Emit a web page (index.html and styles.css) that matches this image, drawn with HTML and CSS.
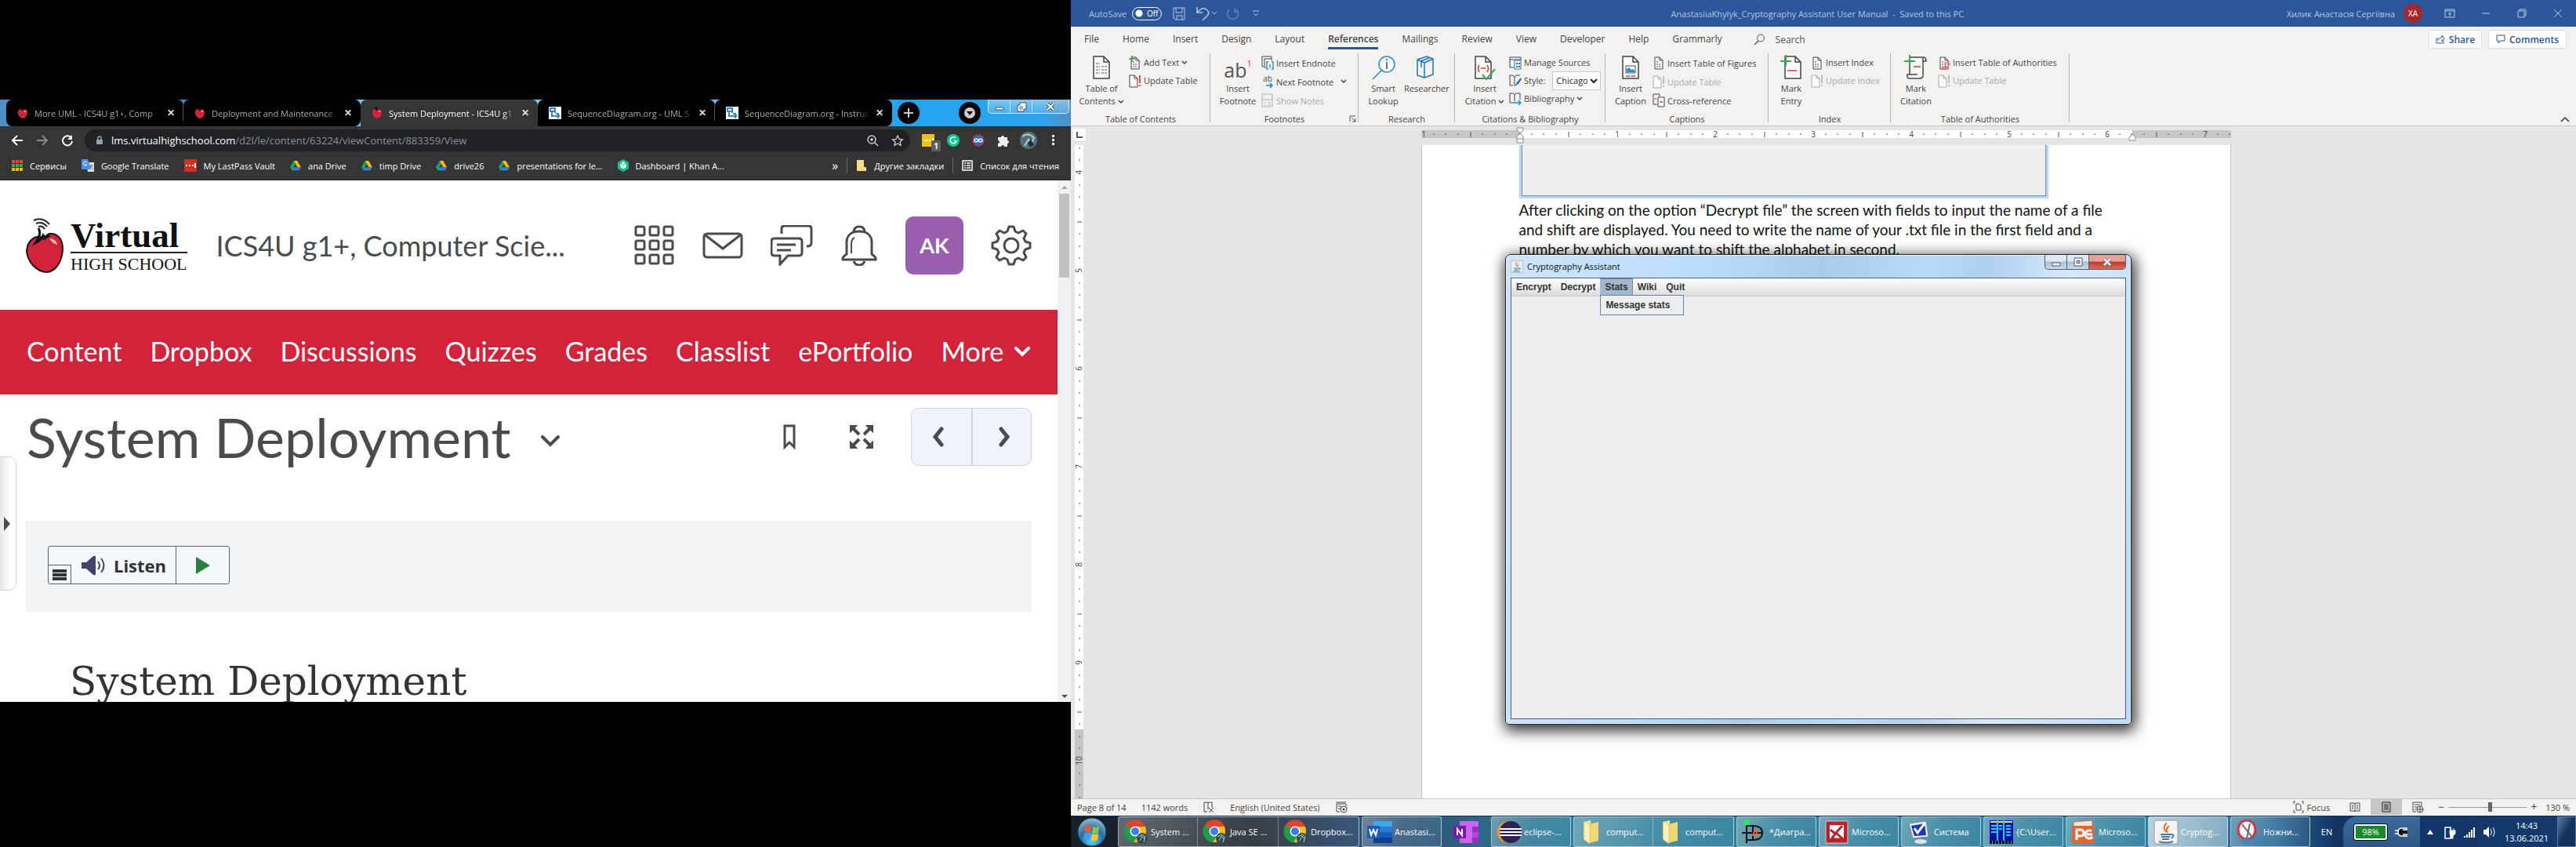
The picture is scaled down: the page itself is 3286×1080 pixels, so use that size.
FILE: index.html
```html
<!DOCTYPE html>
<html lang="en">
<head>
<meta charset="utf-8">
<title>Two-monitor desktop</title>
<link rel="stylesheet" href="styles.css">
</head>
<body>
<svg class="defs" aria-hidden="true">
  <symbol id="apple" viewBox="0 0 48 70"><path d="M10 3Q21-2 30 8M13 7Q21 4 27 11M16 11Q21 9 24 14" fill="none" stroke="#222" stroke-width="2"/><path d="M24 27C15 19 2 27 1 42C2 56 14 69 27 69C38 68 46 56 47 40C47 26 40 19 30 20Q26 21 24 27Z" fill="#d2233a" stroke="#111" stroke-width="2"/><path d="M16 13C20 20 16 26 12 32Q20 28 22 22Q26 27 30 22" fill="none" stroke="#111" stroke-width="3"/><path d="M30 26Q38 26 40 34Q33 32 30 26Z" fill="#f6b9b0"/></symbol>
  <symbol id="fav" viewBox="0 0 14 16"><path d="M7 4C3 2 0 5 1 9Q3 15 8 15Q13 13 13 7Q12 2 7 4Z" fill="#d2233a"/><path d="M7 5Q5 3 6 0" stroke="#000" stroke-width="1.5" fill="none"/><circle cx="10" cy="6" r="1" fill="#f7c4c4"/></symbol>
  <symbol id="seq" viewBox="0 0 16 16"><path d="M0 0h16v16H0z" fill="#fff"/><path d="M2 2h6v4H2zM4 6v6h8M9 9h3v6M8 2v6" fill="none" stroke="#2f86cf" stroke-width="2"/><path d="M11 8l4 3.500-4 3.500z" fill="#2f86cf"/></symbol>
  <symbol id="drive" viewBox="0 0 16 14"><path d="M5.500 0L0 9.500 2.700 14 8 4.500z" fill="#14a667"/><path d="M5.500 0h5L16 9.500h-5.300z" fill="#fbbc05"/><path d="M2.700 14L5.400 9.500H16L13.300 14z" fill="#3b7de8"/></symbol>
  <symbol id="chev" viewBox="0 0 8 6"><path d="M1 1l3 3 3-3" fill="none" stroke="currentColor" stroke-width="1.500"/></symbol>
  <symbol id="doc" viewBox="0 0 24 32"><path d="M2 2h13l7 7v21H2zM15 2v7h7" fill="#fafafa" stroke="#444" stroke-width="1.500"/></symbol>
  <symbol id="sdoc" viewBox="0 0 16 18"><path d="M3 2h6l4 4v11H3zM9 2v4h4" fill="#fafafa" stroke="currentColor"/><path d="M5 8h3M5 11h6M5 14h6" stroke="currentColor" stroke-dasharray="2 1"/></symbol>
  <symbol id="upd" viewBox="0 0 16 18"><path d="M1 2h6l4 4v11H1zM7 2v4h4" fill="#fafafa" stroke="currentColor"/><path d="M14 2v10M14 14v2" stroke="var(--mark,#b5b5b5)" stroke-width="1.700"/></symbol>
  <symbol id="chrome" viewBox="0 0 32 32"><circle cx="15" cy="15" r="14" fill="#fbc116"/><path d="M15 15L3 7A14 14 0 0 1 28 9H15z" fill="#df4332"/><path d="M15 15L3 7A14 14 0 0 0 13 29l6-9z" fill="#229a4e"/><circle cx="15" cy="15" r="6.500" fill="#fff"/><circle cx="15" cy="15" r="5" fill="#3b7de9"/><circle cx="24" cy="24" r="7" fill="#31474f"/><path d="M19 22l5-3 4 3-2 7M21 27l3-6 3 4" stroke="#b7d1d9" fill="none"/></symbol>
  <symbol id="folder" viewBox="0 0 32 32"><path d="M6 3l9-2v27l-9-3z" fill="#f8e492"/><path d="M13 6l12-3v24l-12 3z" fill="#f0d777"/><path d="M7 2l7 4v25l-7-5z" fill="#fff2b5" stroke="#cba84a" stroke-width=".5"/></symbol>
</svg>
<div class="desktop">

<section class="screen-left">
 <div class="browser">
  <div class="tabstrip">
   <div class="tab"><svg class="i14"><use href="#fav"/></svg><span>More UML - ICS4U g1+, Comp</span><button>✕</button></div>
   <div class="tab last"><svg class="i14"><use href="#fav"/></svg><span>Deployment and Maintenance</span><button>✕</button></div>
   <div class="tab active"><svg class="i14"><use href="#fav"/></svg><span>System Deployment - ICS4U g1</span><button>✕</button></div>
   <div class="tab sep"><svg class="i16"><use href="#seq"/></svg><span>SequenceDiagram.org - UML S</span><button>✕</button></div>
   <div class="tab last"><svg class="i16"><use href="#seq"/></svg><span>SequenceDiagram.org - Instruc</span><button>✕</button></div>
   <button class="round" aria-label="New tab"><svg width="14" height="14"><path d="M7 1v12M1 7h12" stroke="#ccc" stroke-width="2"/></svg></button>
   <button class="round menu" aria-label="Tab search"><svg width="16" height="16"><circle cx="8" cy="8" r="7" fill="#ccc"/><path d="M4 6h8l-4 5z" fill="#000"/></svg></button>
   <div class="wctl">
    <button aria-label="Minimise"><svg width="14" height="14"><path d="M2 8h10v3H2z" fill="#fff" stroke="#456"/></svg></button>
    <button aria-label="Restore"><svg width="14" height="14"><path d="M5 2h8v8h-3v3H2V5h3zM5 7h3v3H5z" fill="#fff" stroke="#456"/></svg></button>
    <button class="x" aria-label="Close"><svg width="14" height="14"><path d="M3 3l8 8M11 3l-8 8" stroke="#456" stroke-width="4"/><path d="M3 3l8 8M11 3l-8 8" stroke="#fff" stroke-width="2"/></svg></button>
   </div>
  </div>
  <div class="toolbar">
   <button aria-label="Back"><svg width="16" height="16"><path d="M15 8H2M8 2L2 8l6 6" fill="none" stroke="#fff" stroke-width="2"/></svg></button>
   <button aria-label="Forward"><svg width="16" height="16"><path d="M1 8h13M8 2l6 6-6 6" fill="none" stroke="#888" stroke-width="2"/></svg></button>
   <button aria-label="Reload"><svg width="16" height="16"><path d="M13 5A6 6 0 1 0 14 9" fill="none" stroke="#fff" stroke-width="2"/><path d="M14 1v6H8z" fill="#fff"/></svg></button>
   <div class="omni">
    <svg width="10" height="12"><path d="M1 5h8v6H1z" fill="#9aa0a6"/><path d="M3 5V3a2 2 0 0 1 4 0v2" fill="none" stroke="#9aa0a6" stroke-width="1.500"/></svg>
    <p class="url"><b>lms.virtualhighschool.com</b>/d2l/le/content/63224/viewContent/883359/View</p>
    <svg width="16" height="16"><circle cx="7" cy="7" r="5" fill="none" stroke="#ccc" stroke-width="1.500"/><path d="M11 11l4 4M5 7h4M7 5v4" stroke="#ccc" stroke-width="1.500"/></svg>
    <svg width="16" height="16"><path d="M8 2l2 4.500 4.500.5-3.500 3 1 4.500-4-2.500-4 2.500 1-4.500L1.500 7 6 6.500z" fill="none" stroke="#ccc" stroke-width="1.300"/></svg>
   </div>
   <div class="exts">
    <span class="ext"><svg width="24" height="24"><path d="M4 4h16v16H4z" fill="#f1c21b"/><path d="M7 12h2M10 12h2M13 12h2M18 9v6" stroke="#fff" stroke-width="2"/></svg><i class="badge">1</i></span>
    <span class="ext"><svg width="16" height="16"><circle cx="8" cy="8" r="8" fill="#15c39a"/><path d="M11 5a4 4 0 1 0 1 4H9" fill="none" stroke="#fff" stroke-width="1.500"/></svg></span>
    <span class="ext"><svg width="16" height="16"><circle cx="8" cy="8" r="7" fill="#0a72e8" stroke="#d9263a" stroke-width="1.500"/><path d="M8 8c-2-3-5-2-5 0s3 3 5 0 5-2 5 0-3 3-5 0" fill="none" stroke="#fff" stroke-width="1.500"/></svg></span>
    <span class="ext"><svg width="16" height="16"><path d="M1 4h4a2 2 0 1 1 4 0h4v4a2 2 0 1 1 0 4v4H9a2 2 0 1 0-4 0H1v-4a2 2 0 1 0 0-4z" fill="#eee"/></svg></span>
    <span class="ext"><svg width="22" height="22"><circle cx="11" cy="11" r="11" fill="#56707a"/><path d="M3 6q8-6 15 2l-4 8-3-6-5 8" fill="none" stroke="#b9ccd2" stroke-width="2"/><path d="M10 14l4-4 4 7-5 3z" fill="#1f3138"/></svg></span>
    <span class="ext"><svg width="4" height="16"><path d="M0 1h3v3H0zM0 6h3v3H0zM0 11h3v3H0z" fill="#eee"/></svg></span>
   </div>
  </div>
  <nav class="bookmarks">
   <a href="#"><svg width="14" height="14"><path d="M0 2h14" stroke="#ea4335" stroke-width="4" stroke-dasharray="4 1"/><path d="M0 7h14" stroke="#34a853" stroke-width="4" stroke-dasharray="4 1"/><path d="M0 12h14" stroke="#fbbc05" stroke-width="4" stroke-dasharray="4 1"/></svg>Сервисы</a>
   <a href="#"><svg width="16" height="16"><path d="M6 4h10v12H8z" fill="#ddd"/><path d="M0 0h8l4 13H0z" fill="#4d8bf0"/><path d="M7 4a2.500 2.500 0 1 0 0 3H5" fill="none" stroke="#fff"/><path d="M10 8h5M12 7q1 4-2 5M11 9l4 4" stroke="#777" fill="none"/></svg>Google Translate</a>
   <a href="#"><svg width="16" height="16"><rect width="16" height="16" rx="1" fill="#d32d27"/><path d="M2 8h2M6 8h2M10 8h2M14 5v6" stroke="#fff" stroke-width="2"/></svg>My LastPass Vault</a>
   <a href="#"><svg class="i14"><use href="#drive"/></svg>ana Drive</a>
   <a href="#"><svg class="i14"><use href="#drive"/></svg>timp Drive</a>
   <a href="#"><svg class="i14"><use href="#drive"/></svg>drive26</a>
   <a href="#"><svg class="i14"><use href="#drive"/></svg>presentations for le...</a>
   <a href="#"><svg width="14" height="16"><path d="M7 0l7 4v8l-7 4-7-4V4z" fill="#14bf96"/><circle cx="7" cy="5" r="2" fill="#fff"/><path d="M3 6q0 6 4 6t4-6q-3 0-4 3-1-3-4-3" fill="#fff"/></svg>Dashboard | Khan A...</a>
   <span class="more">»</span>
   <a href="#" class="split"><svg width="14" height="14"><path d="M1 0h9v9h3v5H1z" fill="#fddc83"/></svg>Другие закладки</a>
   <a href="#" class="split"><svg width="14" height="14"><path d="M1 1h12v12H1z" fill="none" stroke="#fff" stroke-width="1.500"/><path d="M3 4h2M6 4h5M3 7h2M6 7h5M3 10h2M6 10h5" stroke="#fff" stroke-width="1.500"/></svg>Список для чтения</a>
  </nav>
  <div class="viewport">
   <main class="lms">
    <header class="lms-head">
     <div class="logo"><svg width="48" height="70"><use href="#apple"/></svg><div class="logo-t"><strong>Virtual</strong><span>HIGH SCHOOL</span></div></div>
     <a href="#" class="course">ICS4U g1+, Computer Scie...</a>
     <div class="tools">
      <svg width="52" height="52" viewBox="0 0 52 52" class="ln"><g id="sq"><rect x="2" y="2" width="11" height="11" rx="2"/><rect x="20" y="2" width="11" height="11" rx="2"/><rect x="38" y="2" width="11" height="11" rx="2"/></g><use href="#sq" y="18"/><use href="#sq" y="36"/></svg>
      <svg width="52" height="52" class="ln"><rect x="2" y="11" width="48" height="30" rx="4"/><path d="M4 13l22 17 22-17"/></svg>
      <svg width="54" height="52" class="ln"><path d="M14 11V5q0-4 4-4h30q4 0 4 4v18q0 4-6 4"/><path d="M5 17h31q4 0 4 4v14q0 4-4 4H22l-10 11v-11H5q-4 0-4-4V21q0-4 4-4zM8 25h24M8 32h18"/></svg>
      <svg width="48" height="52" class="ln"><path d="M3 44h42q1-3-5-7V22c0-8-5-14-16-14S8 14 8 22v15q-6 4-5 7zM17 9q0-7 7-7t7 7M17 46q2 5 7 5t7-5"/><path d="M14 36V24q0-6 4-8" stroke-width="2"/></svg>
      <button class="ak">AK</button>
      <svg width="52" height="52" viewBox="0 0 52 52" class="ln"><path d="M21 8L23 2h6l2 6 4 2 6-3 4 4-3 6 2 4 6 2v6l-6 2-2 4 3 6-4 4-6-3-4 2-2 6h-6l-2-6-4-2-6 3-4-4 3-6-2-4-6-2v-6l6-2 2-4-3-6 4-4 6 3z" stroke-linejoin="round"/><circle cx="26" cy="26" r="9"/></svg>
     </div>
    </header>
    <nav class="lms-nav"><a href="#">Content</a><a href="#">Dropbox</a><a href="#">Discussions</a><a href="#">Quizzes</a><a href="#">Grades</a><a href="#">Classlist</a><a href="#">ePortfolio</a><a href="#">More<svg width="22" height="14"><path d="M3 3l8 8 8-8" fill="none" stroke="#fff" stroke-width="4" stroke-linecap="round"/></svg></a></nav>
    <div class="topic">
     <h1>System Deployment</h1>
     <svg width="28" height="18"><path d="M4 4l10 10L24 4" fill="none" stroke="#494c4e" stroke-width="4" stroke-linecap="round"/></svg>
     <button class="plain bm" aria-label="Bookmark"><svg width="16" height="32"><path d="M2 2h12v27l-6-6-6 6z" fill="none" stroke="#494c4e" stroke-width="3"/></svg></button>
     <button class="plain" aria-label="Full screen"><svg width="32" height="32" stroke="#494c4e" stroke-width="4" fill="#494c4e"><path d="M4 4l9 9M28 4l-9 9M4 28l9-9M28 28l-9-9"/><path d="M2 2h7L2 9zM30 2h-7l7 7zM2 30h7l-7-7zM30 30h-7l7-7z" stroke-width="2"/></svg></button>
     <div class="pager"><button aria-label="Previous"><svg width="16" height="26"><path d="M12 3L4 13l8 10" fill="none" stroke="#494c4e" stroke-width="5" stroke-linecap="round"/></svg></button><button aria-label="Next"><svg width="16" height="26"><path d="M4 3l8 10-8 10" fill="none" stroke="#494c4e" stroke-width="5" stroke-linecap="round"/></svg></button></div>
    </div>
    <div class="reader"><div class="listen">
      <button class="ham" aria-label="Menu"><svg width="18" height="16"><path d="M0 3h18M0 8h18M0 13h18" stroke="#333" stroke-width="4"/></svg></button>
      <button class="lbtn"><svg width="32" height="24"><path d="M1 8h6l9-8h3v24h-3l-9-8H1z" fill="#44426a"/><path d="M22 7q4 5 0 10M26 3q7 9 0 18" fill="none" stroke="#44426a" stroke-width="2"/></svg>Listen</button>
      <button class="play" aria-label="Play"><svg width="18" height="22"><path d="M0 0l18 11L0 22z" fill="#28803f"/></svg></button>
    </div></div>
    <h2>System Deployment</h2>
    <button class="handle" aria-label="Show side panel"><svg width="8" height="18"><path d="M0 0l8 9-8 9z" fill="#494c4e"/></svg></button>
   </main>
   <div class="scroll"><i class="up"></i><b></b><i class="down"></i></div>
  </div>
 </div>
</section>

<section class="screen-right">
 <header class="w-title">
  <span>AutoSave</span><span class="toggle">Off</span>
  <svg width="16" height="18" class="wl"><path d="M1 2h14v15H3l-2-2zM4 2v6h8V2M5 17v-5h7v5"/></svg>
  <svg width="26" height="18" class="wl und"><path d="M1 1v7h7M1 8Q8 0 13 4t1 8l-6 6" stroke-width="1.500"/><path d="M20 7l3 3 3-3"/></svg>
  <svg width="18" height="18" class="wl dim"><path d="M12 2v5h5M14 4a7 7 0 1 1-9 0" stroke-width="1.500"/></svg>
  <svg width="8" height="8" class="wl"><path d="M0 1h8M1 4l3 3 3-3"/></svg>
  <p class="w-name">AnastasiiaKhylyk_Cryptography Assistant User Manual &nbsp;-&nbsp; Saved to this PC</p>
  <span class="user">Хилик Анастасія Сергіївна</span><span class="av">XA</span>
  <div class="w-ctl">
   <button aria-label="Ribbon options"><svg width="14" height="12" class="wl"><path d="M1 1h12v10H1zM1 3h12M7 10V5M5 7l2-2 2 2"/></svg></button>
   <button aria-label="Minimise"><svg width="12" height="12" class="wl"><path d="M1 6h10"/></svg></button>
   <button aria-label="Restore"><svg width="12" height="12" class="wl"><path d="M1 3h8v8H1zM3 3V1h8v8H9"/></svg></button>
   <button aria-label="Close"><svg width="12" height="12" class="wl"><path d="M1 1l10 10M11 1L1 11"/></svg></button>
  </div>
 </header>
 <nav class="w-tabs"><a href="#">File</a><a href="#">Home</a><a href="#">Insert</a><a href="#">Design</a><a href="#">Layout</a><a href="#" class="on">References</a><a href="#">Mailings</a><a href="#">Review</a><a href="#">View</a><a href="#">Developer</a><a href="#">Help</a><a href="#">Grammarly</a>
  <label class="find"><svg width="15" height="15"><circle cx="9" cy="5.500" r="4.500" fill="none" stroke="#555"/><path d="M6 9l-5 5" stroke="#555" stroke-width="1.500"/></svg><input type="text" placeholder="Search"></label>
  <button class="act"><svg width="12" height="12"><path d="M3 5H1v6h9V8M3 8q0-4 5-4V1l3 4-3 4V6" fill="none" stroke="#2b579a"/></svg>Share</button>
  <button class="act c"><svg width="12" height="12"><path d="M1 1h10v7H5l-2 3V8H1z" fill="none" stroke="#2b579a"/></svg>Comments</button>
 </nav>
 <div class="ribbon">
  <section class="grp g1"><div class="gb">
   <button class="big"><svg width="24" height="32"><use href="#doc"/><path d="M5 11h5M5 15h5M5 19h5M5 23h5M12 15h7M12 19h7M12 23h7" stroke="#555" stroke-dasharray="3 1"/></svg>Table of<br>Contents <svg class="cv"><use href="#chev"/></svg></button>
   <div class="col"><button><svg class="ic"><use href="#sdoc"/><path d="M0 4h8M4 0v8" stroke="#2ea04a" stroke-width="1.500"/></svg>Add Text <svg class="cv"><use href="#chev"/></svg></button><button class="red"><svg class="ic"><use href="#upd"/></svg>Update Table</button></div>
  </div><h3>Table of Contents</h3></section>
  <section class="grp g2"><div class="gb">
   <button class="big"><span class="ab">ab<sup>1</sup></span>Insert<br>Footnote</button>
   <div class="col t"><button><svg class="ic"><path d="M3 14H1V1h12v3M13 6V4H4v11h2" fill="none" stroke="#444"/><path d="M9 8H7v9h2M13 8h2v9h-2M11 11v5" fill="none" stroke="#1e8bd1" stroke-width="1.300"/></svg>Insert Endnote</button><button><span class="ic abs">ab<svg width="10" height="8"><path d="M0 4h8M5 1l3 3-3 3" fill="none" stroke="#1e8bd1" stroke-width="1.500"/></svg></span>Next Footnote <svg class="cv far"><use href="#chev"/></svg></button><button disabled><svg class="ic"><path d="M1 1h13v16H1zM1 8h13M4 12h2M8 12h4M4 15h2M8 15h4" fill="none" stroke="#b0b0b0"/></svg>Show Notes</button></div>
  </div><h3>Footnotes</h3><svg class="launch" width="9" height="9"><path d="M1 8V1h7M3 3l5 5M8 4v4H4" fill="none" stroke="#555"/></svg></section>
  <section class="grp g3"><div class="gb">
   <button class="big"><svg width="30" height="32"><circle cx="19" cy="12" r="10" fill="#fafafa" stroke="#1e8bd1" stroke-width="1.500"/><path d="M12 20L1 31" stroke="#1e8bd1" stroke-width="1.500"/><path d="M19 9v9M19 5v2" stroke="#444" stroke-width="1.500"/></svg>Smart<br>Lookup</button>
   <button class="big"><svg width="24" height="32"><path d="M2 6l12-4 8 3v20l-11 4-9-3zM2 6l9 4v19M11 10l11-5M6 8l11-4M7 9v7" fill="none" stroke="#1e74bd" stroke-width="1.500"/></svg>Researcher</button>
  </div><h3>Research</h3></section>
  <section class="grp g4"><div class="gb">
   <button class="big"><svg width="28" height="32"><use href="#doc" width="24" height="32"/><path d="M7 13q-3 4 0 9M17 13q3 4 0 9M9 17h6" fill="none" stroke="#e33" stroke-width="1.500"/><path d="M11 25l5 6L27 18" fill="none" stroke="#3aa655" stroke-width="2"/></svg>Insert<br>Citation <svg class="cv"><use href="#chev"/></svg></button>
   <div class="col"><button><svg class="ic"><path d="M6 15H1V2h14v4M1 5h14" fill="none" stroke="#444"/><path d="M7 6h8v11H7z" fill="#fff" stroke="#1e74bd"/><path d="M9 10h5M9 14h5" stroke="#1e74bd" stroke-width="2" stroke-dasharray="2 1"/></svg>Manage Sources</button>
   <div class="line"><svg class="ic"><path d="M5 15H1V2h4l2 2 2-2h5M7 4v12" fill="none" stroke="#444"/><path d="M15 5l-5 6-3 5 5-3 4-6z" fill="#1e74bd"/></svg><label for="style">Style:</label><select id="style"><option>Chicago</option></select></div>
   <button><svg class="ic"><path d="M6 14H1V2h4l2 2 2-2h5v8M7 4v8" fill="none" stroke="#444"/><path d="M6 14h9M12 11l3 3-3 3" fill="none" stroke="#1e8bd1" stroke-width="1.500"/></svg>Bibliography <svg class="cv"><use href="#chev"/></svg></button></div>
  </div><h3>Citations &amp; Bibliography</h3></section>
  <section class="grp g5"><div class="gb">
   <button class="big"><svg width="24" height="32"><use href="#doc"/><path d="M6 14h12v9H6z" fill="#fff" stroke="#444"/><path d="M7 22v-4l3-2 3 3 2-1 2 2v2z" fill="#2b8fd8"/><path d="M6 27h5M13 27h5" stroke="#e33" stroke-width="1.500"/></svg>Insert<br>Caption</button>
   <div class="col t"><button><svg class="ic"><use href="#sdoc"/></svg>Insert Table of Figures</button><button disabled><svg class="ic"><use href="#upd"/></svg>Update Table</button><button><svg class="ic"><path d="M6 14H1V1h8v3" fill="none" stroke="#444"/><path d="M7 5h8v12H7z" fill="#fff" stroke="#444"/><path d="M3 7h2M9 11h4" stroke="#e33" stroke-width="1.500"/></svg>Cross-reference</button></div>
  </div><h3>Captions</h3></section>
  <section class="grp g6"><div class="gb">
   <button class="big"><svg width="28" height="32"><use href="#doc" x="4" width="24"/><path d="M9 20h12" stroke="#e33" stroke-width="1.500"/><path d="M0 8h14M7 0v14" stroke="#3aa655" stroke-width="2"/></svg>Mark<br>Entry</button>
   <div class="col"><button><svg class="ic"><use href="#sdoc"/></svg>Insert Index</button><button disabled><svg class="ic"><use href="#upd"/></svg>Update Index</button></div>
  </div><h3>Index</h3></section>
  <section class="grp g7"><div class="gb">
   <button class="big"><svg width="30" height="32"><path d="M7 3h17q4 0 4 5h-4v18q0 4-4 4H7q-4 0-3-5h13M7 3v22M24 8V4" fill="#fafafa" stroke="#444" stroke-width="1.500"/><path d="M12 15h9" stroke="#e33" stroke-width="1.500"/><path d="M0 8h14M7 0v14" stroke="#3aa655" stroke-width="2"/></svg>Mark<br>Citation</button>
   <div class="col"><button><svg class="ic"><use href="#sdoc"/><path d="M8 9h6v2h2M10 11v6H6v-2h7v-4" fill="#fff" stroke="#e33"/></svg>Insert Table of Authorities</button><button disabled><svg class="ic"><use href="#upd"/></svg>Update Table</button></div>
  </div><h3>Table of Authorities</h3></section>
  <button class="fold" aria-label="Collapse the ribbon"><svg width="12" height="8"><path d="M1 7l5-5 5 5" fill="none" stroke="#333" stroke-width="1.500"/></svg></button>
 </div>
 <div class="hruler"><span class="corner"><svg width="8" height="8"><path d="M1 0v7h7" fill="none" stroke="#555" stroke-width="2"/></svg></span>
  <svg class="hr" width="1033" height="22"><defs><pattern id="tk" width="125" height="10" patternUnits="userSpaceOnUse" y="5"><path d="M16 4v2M31 4v2M47 4v2M63 2v7M78 4v2M94 4v2M109 4v2" stroke="#555"/></pattern></defs><path d="M0 5h126v10H0zM907 5h126v10H907z" fill="#c6c6c6"/><path d="M126 5h781v10H126z" fill="#fff"/><path d="M0 5h1033v10H0z" fill="url(#tk)"/><g class="rn"><text x="3" y="14">1</text><text x="250" y="14">1</text><text x="375" y="14">2</text><text x="500" y="14">3</text><text x="625" y="14">4</text><text x="750" y="14">5</text><text x="875" y="14">6</text><text x="1000" y="14">7</text></g><path d="M122 2h8v3l-4 4 4 4v8h-8v-8l4-4-4-4zM122 16h8M903 18v-4l4-4 4 4v4z" fill="#fff" stroke="#888"/></svg>
 </div>
 <div class="w-body">
  <svg class="vr" width="22" height="833"><defs><pattern id="vk" width="11" height="125" patternUnits="userSpaceOnUse" x="5" y="35"><path d="M5 16h2M5 31h2M5 47h2M3 63h6M5 78h2M5 94h2M5 109h2" stroke="#555"/></pattern></defs><path d="M5 0h11v745H5z" fill="#fff"/><path d="M5 745h11v88H5z" fill="#c6c6c6"/><path d="M5 0h11v833H5z" fill="url(#vk)"/><g class="rn"><text transform="translate(14 35) rotate(-90)">4</text><text transform="translate(14 160) rotate(-90)">5</text><text transform="translate(14 285) rotate(-90)">6</text><text transform="translate(14 410) rotate(-90)">7</text><text transform="translate(14 535) rotate(-90)">8</text><text transform="translate(14 660) rotate(-90)">9</text><text transform="translate(14 785) rotate(-90)">10</text></g></svg>
  <div class="canvas"><article class="page">
   <div class="shot"><div></div></div>
   <p>After clicking on the option “Decrypt file” the screen with fields to input the name of a file<br>and shift are displayed. You need to write the name of your .txt file in the first field and a<br>number by which you want to shift the alphabet in second.</p>
  </article></div>
 </div>
 <footer class="status">
  <span>Page 8 of 14</span><span>1142 words</span>
  <svg width="16" height="16"><path d="M6 14H2V2h4l1 1 1-1h4v7M7 3v8M8 9l6 6M14 9l-6 6" fill="none" stroke="#444"/></svg>
  <span>English (United States)</span>
  <svg width="16" height="16"><path d="M6 14H2V4h12v3M1 2h13M4 7h4M4 10h3" fill="none" stroke="#444"/><circle cx="11" cy="11" r="4" fill="none" stroke="#444"/><circle cx="11" cy="11" r="1.500" fill="#444"/></svg>
  <div class="views">
   <span class="fc"><svg width="14" height="16"><path d="M3 1H1v3M11 1h2v3M3 15H1v-3M11 15h2v-3M4 4h4l2 2v6H4z" fill="none" stroke="#444"/></svg>Focus</span>
   <button aria-label="Read mode"><svg width="14" height="14"><path d="M1 2h5l1 1 1-1h5v10H8l-1 1-1-1H1zM7 3v10M3 5h2M3 7h2M3 9h2M9 5h2M9 7h2M9 9h2" fill="none" stroke="#444"/></svg></button>
   <button class="on" aria-label="Print layout"><svg width="12" height="14"><path d="M1 1h10v12H1zM3 4h6M3 6h6M3 8h6M3 10h6" fill="none" stroke="#222"/></svg></button>
   <button aria-label="Web layout"><svg width="15" height="15"><path d="M5 13H1V1h11v5M3 4h7M3 7h4M3 10h2" fill="none" stroke="#444"/><circle cx="10" cy="10" r="4" fill="none" stroke="#444"/><path d="M6 10h8M10 6v8" stroke="#444"/></svg></button>
   <span class="zm">−</span><input type="range" min="0" max="100" value="54" aria-label="Zoom"><span class="zm">+</span><span class="pct">130 %</span>
  </div>
 </footer>
 <footer class="taskbar">
  <button class="orb" aria-label="Start"><svg width="38" height="38"><defs><radialGradient id="ob" cx=".5" cy=".8" r=".8"><stop offset="0" stop-color="#5fd4f5"/><stop offset=".5" stop-color="#1f6fa8"/><stop offset="1" stop-color="#9db9cd"/></radialGradient></defs><circle cx="19" cy="19" r="18" fill="url(#ob)" stroke="#12334f"/><path d="M10 12q4-3 8-1l-1 8q-5-2-8 1z" fill="#ef5a28"/><path d="M20 12q4 2 8 0l-1 8q-4 2-8 0z" fill="#8cc63f"/><path d="M9 21q4-3 8-1l-1 8q-4-2-8 1z" fill="#3aa0e8"/><path d="M19 21q4 2 8 0l-1 8q-4 2-8 0z" fill="#fdc52c"/></svg></button>
  <div class="tg"><button><svg class="i32"><use href="#chrome"/></svg>System ...</button><button><svg class="i32"><use href="#chrome"/></svg>Java SE ...</button><button><svg class="i32"><use href="#chrome"/></svg>Dropbox...</button></div>
  <div class="tg"><button><svg class="i32"><path d="M8 2h24v7H8z" fill="#41a5ee"/><path d="M8 9h24v7H8z" fill="#2b7cd3"/><path d="M8 16h24v7H8z" fill="#185abd"/><path d="M8 23h24v7H8z" fill="#103f91"/><path d="M0 8h16v16H0z" fill="#185abd"/><path d="M3 12l2 8 3-7 3 7 2-8" fill="none" stroke="#fff" stroke-width="2"/></svg>Anastasi...</button></div>
  <button class="one" aria-label="OneNote"><svg width="34" height="32"><path d="M8 2h24v28H8z" fill="#ca64ea"/><path d="M24 9h8v7h-8zM24 23h8v7h-8z" fill="#9332bf"/><path d="M24 16h8v7h-8z" fill="#ae4bd5"/><path d="M0 8h16v16H0z" fill="#7719aa"/><path d="M5 20v-8l6 8v-8" fill="none" stroke="#fff" stroke-width="2"/></svg></button>
  <div class="tg"><button><svg class="i32"><circle cx="15" cy="16" r="14" fill="#f7941e"/><circle cx="18" cy="16" r="14" fill="#2c2255"/><path d="M4 12h28M4 16h28M4 20h28" stroke="#fff" stroke-width="2"/></svg>eclipse-...</button></div>
  <div class="tg"><button><svg class="i32"><use href="#folder"/></svg>comput...</button><button><svg class="i32"><use href="#folder"/></svg>comput...</button></div>
  <div class="tg"><button><svg class="i32"><path d="M6 4v26M6 8h8q12 0 12 9t-12 9H6M0 17h26M14 8v18" fill="none" stroke="#111" stroke-width="2"/><path d="M3 1h6v6H3z" fill="#1f3"/><path d="M14 20l3-8 3 8z" fill="none" stroke="#e8662a" stroke-width="2"/></svg>*Диагра...</button></div>
  <div class="tg"><button><svg class="i32"><path d="M2 2h28v28H2z" fill="#b8222a" stroke="#e6c8c8"/><path d="M7 7h18v18H7z" fill="#fff"/><path d="M8 13l6 5 9-10M15 17l9 8H9z" fill="none" stroke="#b8222a" stroke-width="3"/></svg>Microso...</button></div>
  <div class="tg"><button><svg class="i32"><path d="M3 5l22-3 3 20-20 2z" fill="#e8eef2" stroke="#888"/><path d="M6 8l17-3 2 15-15 1z" fill="#1739b8"/><path d="M10 11l4 6 9-12" fill="none" stroke="#fff" stroke-width="3"/><ellipse cx="18" cy="28" rx="8" ry="3" fill="#dde4e8"/></svg>Система</button></div>
  <div class="tg"><button><svg class="i32"><path d="M1 1h30v26H1z" fill="#0010a8"/><path d="M2 3h8M12 3h6M20 3h10" stroke="#ee3" stroke-width="2"/><path d="M3 8h7M3 12h7M3 16h7M13 8h4M13 12h4M22 8h6M22 12h6M22 16h6M22 20h6M11 1v26M19 1v26" stroke="#2cf" stroke-width="2"/><path d="M1 29h30" stroke="#111" stroke-width="4" stroke-dasharray="3 1"/></svg>{C:\User...</button></div>
  <div class="tg"><button><svg class="i32"><path d="M3 3l24-2v24L3 28z" fill="#f9e3d3" stroke="#e0672d"/><path d="M1 8h28v22H1z" fill="#e8642a"/><path d="M7 26V13h5q4 0 4 4t-4 4H7M26 15a5 5 0 1 0 1 7M20 19h7" fill="none" stroke="#fff" stroke-width="3"/></svg>Microso...</button></div>
  <div class="tg lit"><button><svg class="i32"><rect x="1" y="1" width="30" height="30" rx="3" fill="#f5f5f5" stroke="#999"/><path d="M17 4q-6 6-1 12M20 8q-5 4-2 9" fill="none" stroke="#e8762c" stroke-width="2"/><path d="M9 19h14M10 22h11M11 25h9M7 28q9 3 18 0M23 19q5 0 0 5" fill="none" stroke="#4d7ba3" stroke-width="2"/></svg>Cryptog...</button></div>
  <div class="tg"><button><svg class="i32"><ellipse cx="14" cy="13" rx="11" ry="12" fill="#f6f6f6" stroke="#d03a3a" stroke-width="3"/><path d="M8 6l14 18M18 5L14 24" stroke="#667" stroke-width="2"/><circle cx="14" cy="27" r="3" fill="none" stroke="#2b86d0" stroke-width="2"/><circle cx="25" cy="26" r="3" fill="none" stroke="#2b86d0" stroke-width="2"/></svg>Ножни...</button></div>
  <span class="lang">EN</span>
  <div class="power"><span class="bat">98%</span><svg width="18" height="16"><path d="M16 3H9q-5 0-5 5t5 5h7M0 6h4M0 10h4M10 5h6M10 11h6" fill="#111" stroke="#fff" stroke-width="1.500"/></svg></div>
  <div class="tray">
   <svg width="8" height="6"><path d="M4 0l4 6H0z" fill="#fff"/></svg>
   <svg width="16" height="18"><path d="M2 3h7v14H2z" fill="none" stroke="#fff" stroke-width="1.500"/><path d="M8 7h7v4l-3 3v3h-2v-3l-2-3zM9 4v3M13 4v3" fill="#fff" stroke="#fff"/></svg>
   <svg width="16" height="16"><path d="M1 13h2v2H1zM4 11h2v4H4zM7 8h2v7H7zM10 5h2v10h-2zM13 2h2v13h-2z" fill="#fff"/></svg>
   <svg width="16" height="18"><path d="M1 6h3l4-4v14l-4-4H1z" fill="#fff"/><path d="M10 5q3 4 0 8M13 3q4 6 0 12" fill="none" stroke="#fff"/></svg>
  </div>
  <div class="clock">14:43<br>13.06.2021</div>
  <button class="peek" aria-label="Show desktop"></button>
 </footer>

 <div class="java" role="dialog" aria-label="Cryptography Assistant">
  <div class="j-title"><svg width="16" height="16"><rect width="16" height="16" rx="1" fill="#e8edf2" stroke="#8a99a8"/><path d="M8 2q-3 3 0 6M10 4q-2 2-1 4" fill="none" stroke="#e8762c"/><path d="M4 10h7M5 12h5M3 14h9M11 10q3 0 0 2" fill="none" stroke="#4d7ba3"/></svg><span>Cryptography Assistant</span>
   <div class="j-ctl"><button aria-label="Minimise"><svg width="12" height="12"><path d="M1 7h10v4H1z" fill="#fff" stroke="#556"/></svg></button><button aria-label="Maximise"><svg width="12" height="12"><path d="M1 1h10v10H1zM4 4.500h4v3H4z" fill="#fff" fill-rule="evenodd" stroke="#556"/></svg></button><button class="x" aria-label="Close"><svg width="12" height="12"><path d="M2 2l8 8M10 2l-8 8" stroke="#556" stroke-width="4"/><path d="M2 2l8 8M10 2l-8 8" stroke="#fff" stroke-width="2.500"/></svg></button></div>
  </div>
  <div class="j-client"><div class="j-menu"><button>Encrypt</button><button>Decrypt</button><div class="j-drop"><button class="on">Stats</button><button class="pop">Message stats</button></div><button>Wiki</button><button>Quit</button></div></div>
 </div>
</section>
</div>
</body>
</html>
```
FILE: styles.css
```css
*{box-sizing:border-box}
body{margin:0;background:#000;font-family:"Open Sans","Noto Sans",sans-serif;font-size:11px}
button{font:inherit;color:inherit;background:none;border:0;padding:0;margin:0}
a{color:inherit;text-decoration:none}
h1,h2,h3,p{margin:0;font-weight:400}
svg{flex:none;display:block}
.defs{position:absolute;width:0;height:0}
.i14{width:14px;height:16px}
.i16{width:16px;height:16px}
.i32{width:32px;height:32px}
.desktop{display:grid;grid-template-columns:1366fr 1920fr;grid-template-rows:100vh;overflow:hidden}

/* left monitor: browser */
.screen-left{padding:127px 0 185px;min-width:0;min-height:0;display:flex;background:#000}
.browser{flex:1;min-width:0;min-height:0;display:flex;flex-direction:column;background:#353535;overflow:hidden}
.tabstrip{display:flex;flex:none;height:34px;padding-left:8px;background:linear-gradient(90deg,#4f90c8,#2b8fd0 30%,#6fd2ff 34%,#5cc8fb 70%,#22a4f0 84%,#2ba4ee 97%,#4f90c8)}
.tab{flex:0 1 226px;min-width:0;display:flex;align-items:center;gap:8px;padding:0 8px 0 14px;background:#000;color:#a8acb1;border-radius:8px 8px 0 0}
.tab:first-child{border-radius:8px 8px 0 8px}
.tab:not(.last):not(.active){background:linear-gradient(#555,#555) right center/1px 20px no-repeat #000}
.tab span{flex:1;overflow:hidden;white-space:nowrap;-webkit-mask-image:linear-gradient(90deg,#000 90%,transparent);mask-image:linear-gradient(90deg,#000 90%,transparent)}
.tab.active{background:#353535;color:#fff}
.tab button{width:16px;margin-left:-4px;color:#e0e0e0;font-size:12px;line-height:16px;font-weight:700}
.tab.last{border-bottom-right-radius:8px}
.round{width:28px;height:28px;border-radius:50%;background:#000;display:grid;place-items:center;margin:3px 0 0 7px}
.round.menu{margin-left:auto}
.wctl{display:flex;height:18px;margin:0 2px 0 9px;border:1px solid #d7eefb;border-top:0;border-radius:0 0 5px 5px;background:linear-gradient(#ffffff66,#ffffff22)}
.wctl button{width:28px;display:grid;place-items:center;border-right:1px solid #bfe2f6}
.wctl .x{width:46px;border:0}
.toolbar{display:flex;flex:none;align-items:center;height:36px;padding:0 6px}
.toolbar>button{width:32px;display:grid;place-items:center}
.omni{flex:1;min-width:0;display:flex;align-items:center;gap:16px;height:28px;margin:0 7px 0 6px;padding:0 8px 0 14px;border-radius:14px;background:#202124}
.omni svg:first-child{margin-right:-6px}
.url{flex:1;font-size:13px;line-height:20px;color:#8d9196;white-space:nowrap;overflow:hidden}
.url b{font-weight:400;color:#fff}
.exts{display:flex}
.ext{width:32px;display:grid;place-items:center;position:relative}
.badge{position:absolute;right:0;bottom:-2px;width:12px;height:14px;border-radius:2px;background:#5a5d61;color:#fff;font:700 10px/14px "Open Sans",sans-serif;text-align:center}
.bookmarks{display:flex;flex:none;align-items:center;gap:19px;height:33px;padding:0 15px 4px;border-bottom:1px solid #222;color:#fff;white-space:nowrap}
.bookmarks a{display:flex;align-items:center;gap:9px}
.bookmarks .more{margin-left:auto;font-size:16px;line-height:16px;margin-right:-8px}
.bookmarks .split{border-left:1px solid #666;padding-left:11px;height:20px;margin-right:-8px}
.bookmarks .split:last-child{margin-right:0}
.viewport{flex:1;min-height:0;display:flex;background:#fff}
.lms{flex:1;min-width:0;position:relative;overflow:hidden;font-family:Lato,"Open Sans",sans-serif;color:#494c4e}
.lms-head{display:flex;align-items:center;height:165px;padding:0 33px}
.logo{display:flex;align-items:center;gap:9px}
.logo-t{display:flex;flex-direction:column;font-family:"Liberation Serif",serif;color:#111;padding-top:6px}
.logo-t strong{font-size:45px;line-height:41px;border-bottom:2px solid #222}
.logo-t span{font-size:22px;line-height:28px;white-space:nowrap}
.course{font-size:36px;line-height:44px;margin-left:37px;white-space:nowrap}
.tools{margin-left:auto;display:flex;align-items:center;gap:35px}
.ln{fill:none;stroke:#494c4e;stroke-width:3}
.ak{width:74px;height:74px;border-radius:10px;background:#995fae;color:#fff;font-size:27px;font-weight:700}
.lms-nav{display:flex;align-items:center;gap:36px;height:115px;padding:0 34px 10px;background:linear-gradient(#d2233a 108px,#fafafa 108px);color:#fff;font-size:34px;line-height:40px;white-space:nowrap}
.lms-nav a{display:flex;align-items:center;gap:13px}
.topic{display:flex;align-items:center;height:96px;padding:0 33px 2px 34px}
.topic h1{font-size:70px;line-height:84px;white-space:nowrap;margin-right:36px}
.topic h1+svg{margin-top:10px}
.bm{margin-left:auto;margin-right:68px}
.pager{display:flex;width:154px;height:74px;margin-left:47px;border:1px solid #cdd5dc;border-radius:10px;background:#f0f3fb}
.pager button{flex:1;display:grid;place-items:center;padding-right:8px}
.pager button+button{border-left:2px solid #cdd5dc;padding:0 0 0 6px}
.reader{margin:58px 33px 0;padding:32px 28px;height:116px;background:#f1f3f5}
.listen{display:flex;width:232px;height:49px;border:1px solid #5b6268;border-radius:3px;background:#f5f9fd;color:#333;font:700 22px/30px "Open Sans",sans-serif}
.ham{align-self:flex-end;width:29px;height:24px;border:solid #5b6268;border-width:1px 1px 0 0;display:grid;place-items:center}
.lbtn{flex:1;display:flex;align-items:center;justify-content:center;gap:10px}
.play{width:68px;border-left:1px solid #5b6268;display:grid;place-items:center}
.lms h2{margin:56px 0 0 89px;font:400 50px/66px "DejaVu Serif",serif;color:#333;white-space:nowrap}
.handle{position:absolute;left:-1px;top:352px;width:22px;height:171px;padding-left:5px;border:1px solid #cdd5dc;border-radius:0 9px 9px 0;background:linear-gradient(90deg,#e8e8e8,#fff 70%);display:flex;align-items:center}
.scroll{width:17px;background:#f1f1f1;display:flex;flex-direction:column;align-items:center;padding:7px 0 5px}
.scroll b{width:13px;height:107px;background:#c1c1c1;margin-top:6px}
.scroll i{border:4px solid transparent}
.scroll .up{border-top:0;border-bottom-color:#a3a3a3}
.scroll .down{border-bottom:0;border-top-color:#505050;margin-top:auto}

/* right monitor: Word */
.screen-right{position:relative;min-width:0;min-height:0;display:flex;flex-direction:column;background:#e6e6e6;color:#444;overflow:hidden}
.wl{fill:none;stroke:#b9c8e0}
.w-title{display:flex;flex:none;align-items:center;height:34px;padding-left:23px;background:#2b579a;color:#b5c6e0;white-space:nowrap}
.toggle{width:38px;height:17px;margin:0 14px 0 7px;border:1px solid #fff;border-radius:9px;color:#fff;line-height:14px;padding-left:18px;font-size:10px;background:radial-gradient(circle at 8px 7px,#fff 4px,transparent 5px)}
.w-title .und{margin:0 11px 0 14px}
.w-title .dim{opacity:.4;margin-right:17px}
.w-name{flex:1;text-align:center;padding-left:114px}
.user{margin-right:11px}
.av{width:24px;height:24px;border-radius:50%;background:#a4262c;color:#fff;text-align:center;line-height:24px;font-size:10px}
.w-ctl{display:flex;margin:0 0 0 12px}
.w-ctl button{width:46px;height:34px;display:grid;place-items:center}
.w-tabs{display:flex;flex:none;align-items:center;gap:30px;height:34px;padding:0 12px 2px 17px;background:#f3f2f1;white-space:nowrap;font-size:12px}
.w-tabs>a{line-height:20px}
.w-tabs .on{font-weight:600;box-shadow:0 3px #2b579a}
.find{display:flex;align-items:center;gap:13px;margin-left:10px;flex:1}
.find input{border:0;background:none;font:inherit;padding:0;width:90px}
.find input::placeholder{color:#555;opacity:1}
.act{display:flex;align-items:center;justify-content:center;gap:5px;width:68px;height:24px;margin-right:-22px;background:#fff;border:1px solid #e1dfdd;border-radius:2px;color:#2b579a;font-weight:600}
.act.c{width:100px;margin-right:0}
.ribbon{display:flex;flex:none;height:93px;background:#f3f2f1;border-bottom:1px solid #c8c6c4}
.grp{position:relative;display:flex;flex-direction:column;background:linear-gradient(#b8b6b4,#b8b6b4) right top/1px 88px no-repeat}
.gb{display:flex;flex:1;padding-left:var(--pad)}
.grp h3{font-size:11px;line-height:16px;text-align:center}
.g1{width:178px;--big:62px;--pad:8px}
.g2{width:189px;--big:60px;--pad:5px}
.g3{width:123px;--big:53px;--pad:5px}
.g4{width:192px;--big:62px;--pad:7px}
.g5{width:208px;--big:56px;--pad:4px}
.g6{width:156px;--big:50px;--pad:4px}
.g7{width:228px;--big:56px;--pad:4px}
.big{width:var(--big);flex:none;padding-top:2px;line-height:16px;text-align:center;align-self:flex-start;font-size:11px}
.big>svg:first-child{margin:0 auto 3px}
.cv{width:8px;height:6px;display:inline-block}
.cv.far{margin-left:6px}
.ab{display:block;height:35px;font-size:25px;line-height:38px;color:#555;white-space:nowrap}
.ab sup{font-size:11px;line-height:1px;color:#e33;vertical-align:14px}
.abs{font-size:10px;line-height:10px}
.abs svg{margin:0 0 0 6px}
.col{display:flex;flex-direction:column;white-space:nowrap}
.g1 .col{padding-left:4px}
.col button,.line{display:flex;align-items:center;gap:3px;height:23px}
.col.t button{height:24px}
.col button:disabled{color:#a9a9a9}
.ic{width:16px;height:18px}
.red{--mark:#e33}
.line select{width:62px;height:24px;margin-left:6px;border:1px solid #c8c6c4;background:#fff;font:inherit;color:#222;padding:0}
.launch{position:absolute;right:3px;bottom:4px}
.fold{margin:auto 8px 4px auto}
.hruler{display:flex;height:24px;flex:none;padding-right:16px}
.corner{width:22px;display:grid;place-items:center;background:#fff;background-clip:content-box;padding:3px 3px 6px}
.hr{margin:0 auto}
.rn text{font:10px "Open Sans",sans-serif;fill:#444;text-anchor:middle}
.w-body{flex:1;min-height:0;display:flex;overflow:hidden}
.canvas{flex:1;display:flex;justify-content:center;padding-right:16px}
.page{width:1033px;padding:0 100px 0 124px;background:#fff;border:solid #c6c6c6;border-width:0 1px;color:#111}
.page p{font:19px/25px Lato,sans-serif;white-space:nowrap;margin-top:2px}
.shot{width:675px;height:68px;padding:0 3px 3px;background:#b5d7fa}
.shot div{height:100%;background:#eee;border:solid #7e8c9c;border-width:0 1px 1px}
.status{display:flex;align-items:center;gap:19px;height:22px;flex:none;padding:0 8px 1px;border-top:1px solid #c6c6c6;background:#f3f2f1;white-space:nowrap}
.views{margin-left:auto;display:flex;align-items:center;height:100%}
.fc{display:flex;gap:4px;align-items:center;margin-right:12px}
.views button{width:40px;height:100%;display:grid;place-items:center}
.views .on{background:#c8c6c4}
.zm{font-size:14px;line-height:16px;width:12px;text-align:center}
.views button+.zm{margin-left:4px}
.views input{appearance:none;width:100px;height:12px;margin:0 3px;background:linear-gradient(#999,#999) center/100% 1px no-repeat}
.views input::-webkit-slider-thumb{appearance:none;width:5px;height:12px;background:#666}
.pct{margin-left:9px}
.taskbar{display:flex;gap:3px;align-items:stretch;height:40px;flex:none;background:linear-gradient(90deg,#16202c,#1c232b 12%,#2b4a70 19%,#2d5c7e 25%,#2b7d99 32%,#2f7f9d 70%,#2a6a96 80%,#123463 84%,#143a6e);color:#fff;border-top:1px solid #16314a;white-space:nowrap}
.orb{width:54px;display:grid;place-items:center;margin-right:3px}
.tg{display:flex;border:1px solid #cfe6f2aa;border-radius:3px;background:linear-gradient(120deg,#ffffff55,#ffffff22 50%,#ffffff10)}
.tg button{width:100px;display:flex;align-items:center;gap:3px;padding-left:6px}
.tg button+button{width:103px;border-left:1px solid #ffffff55}
.lit{background:linear-gradient(120deg,#ffffffaa,#ffffff66)}
.one{width:57px;display:grid;place-items:center}
.lang{align-self:center;width:36px;text-align:center}
.power{width:98px;display:flex;align-items:center;gap:10px;padding-left:14px;border-top-left-radius:18px;background:linear-gradient(#3d6b9b,#2a5687)}
.bat{width:42px;height:20px;border:2px solid #fff;outline:1px solid #111;background:#168a2c;text-align:center;line-height:16px;border-radius:2px}
.tray{display:flex;align-items:center;gap:9px;margin-left:6px;flex:1}
.tray svg:first-child{margin-right:4px}
.clock{align-self:center;text-align:center;line-height:16px;width:64px;margin-right:4px}
.peek{width:24px;background:linear-gradient(120deg,#5b7da5,#15305b 50%);border:1px solid #5a7ba4}

/* Java window floating over the document */
.java{position:absolute;left:554px;top:324px;width:799px;height:600px;display:flex;flex-direction:column;padding:0 6px 6px;border:1px solid #1c2733;border-radius:7px 7px 5px 5px;background:linear-gradient(100deg,#cfe4fb,#b9dbfb 30%,#a9cbe9 45%,#b9dbfb 60%,#aecfef 68%,#d5e8fc 80%,#b9dbfb);box-shadow:inset 0 0 0 1px #eef7ff,2px 5px 18px 3px #000c}
.j-title{display:flex;align-items:center;gap:5px;height:29px;color:#111}
.j-ctl{align-self:flex-start;margin-left:auto;display:flex;height:19px;border:1px solid #56606c;border-top:0;border-radius:0 0 5px 5px;overflow:hidden;background:linear-gradient(#dfe9f3 45%,#a9bfd4 50%,#c9dcec)}
.j-ctl button{width:28px;display:grid;place-items:center;border-right:1px solid #56606c}
.j-ctl .x{width:46px;border:0;background:linear-gradient(#e5a393 45%,#c3392a 50%,#d5705a)}
.j-client{flex:1;border:1px solid #4f6376;background:#eee}
.j-menu{display:flex;height:23px;border-bottom:1px solid #ccc;background:linear-gradient(#fff,#dcdcdc);color:#333;font:700 12px/20px "Liberation Sans",Arial,sans-serif}
.j-menu button{font:inherit;padding:0 6px;height:22px}
.j-drop{position:relative}
.j-menu .on{background:#a3b8cc;box-shadow:inset -1px 1px #7a8a99}
.j-menu .pop{position:absolute;left:0;top:21px;width:107px;height:26px;border:1px solid #6382bf;background:#eee;text-align:left;white-space:nowrap;z-index:1}
```
